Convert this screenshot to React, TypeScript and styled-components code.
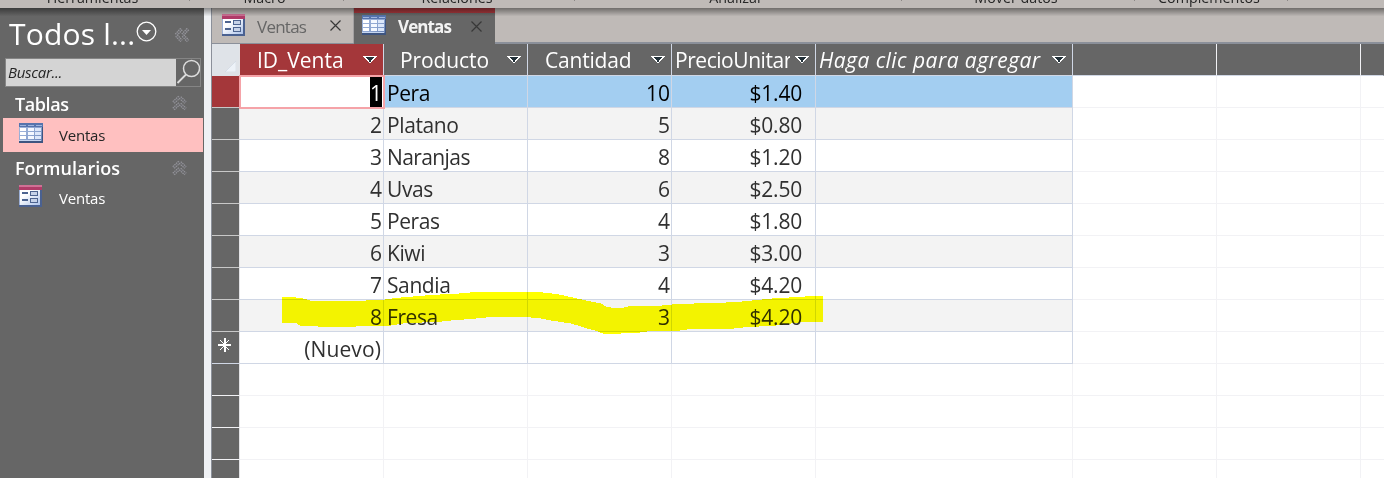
import React from 'react';
import styled, { createGlobalStyle, css } from 'styled-components';

const GlobalStyle = createGlobalStyle`
  * { box-sizing: border-box; }
  body {
    margin: 0;
    overflow: hidden;
    font-family: 'Open Sans', 'Noto Sans', sans-serif;
  }
`;

const Window = styled.div`
  position: relative;
  width: 1384px;
  height: 478px;
  display: flex;
  flex-direction: column;
  background: #fff;
  overflow: hidden;
`;

const Ribbon = styled.div`
  display: flex;
  flex: 0 0 8px;
  height: 8px;
  background: #bfbab7;
`;

const RibbonGroup = styled.div<{ $width: number }>`
  flex: 0 0 ${p => p.$width}px;
  height: 1px;
  display: flex;
  justify-content: center;
  align-items: flex-end;
  border-right: 1px solid #8c8886;
`;

const RibbonLabel = styled.span`
  font-size: 14.3px;
  line-height: 20px;
  color: #262626;
  white-space: nowrap;
  margin: 0 4px -7px 0;
`;

const RibbonShadow = styled.div`
  position: absolute;
  top: 8px;
  left: 0;
  right: 0;
  height: 8px;
  background: linear-gradient(rgba(0, 0, 0, 0.42), rgba(0, 0, 0, 0.22) 50%, rgba(0, 0, 0, 0.02));
  pointer-events: none;
`;

const Body = styled.div`
  display: flex;
  flex: 1;
  min-height: 0;
`;

const Sidebar = styled.aside`
  flex: 0 0 204px;
  background: #666;
  color: #fff;
  padding-top: 7px;
`;

const SidebarHead = styled.div`
  display: flex;
  height: 43px;
  padding-left: 9px;
`;

const SidebarTitle = styled.h1`
  margin: 0;
  width: 127px;
  font-size: 30px;
  font-weight: 400;
  line-height: 38px;
  letter-spacing: 0.2px;
  white-space: nowrap;
`;

const TitleButton = styled.div`
  width: 38px;
  padding-top: 6px;
`;

const CollapseButton = styled.div`
  padding-top: 10px;
`;

const SearchBox = styled.div`
  display: flex;
  width: 196px;
  height: 29px;
  margin-left: 5px;
  border: 1px solid #858585;
  background: #666;
`;

const SearchField = styled.div`
  width: 170px;
  padding-left: 2px;
  background: #d4d4d4;
  color: #262626;
  font-size: 15px;
  font-style: italic;
  line-height: 26px;
  letter-spacing: -0.3px;
`;

const GroupHead = styled.div<{ $height: number }>`
  display: flex;
  justify-content: space-between;
  align-items: center;
  height: ${p => p.$height}px;
  padding: 0 17px 0 15px;
`;

const GroupName = styled.span<{ $spacing: number; $drop?: number }>`
  font-size: 18px;
  font-weight: 600;
  line-height: 24px;
  letter-spacing: ${p => p.$spacing}px;
  margin-top: ${p => p.$drop ?? 0}px;
`;

const NavItem = styled.div<{ $selected?: boolean }>`
  display: flex;
  align-items: center;
  height: ${p => (p.$selected ? 34 : 30)}px;
  margin: 0 1px 0 3px;
  padding-left: 16px;
  background: ${p => (p.$selected ? '#ffc0c0' : 'transparent')};
  color: ${p => (p.$selected ? '#262626' : '#fff')};
  font-size: 15px;
  letter-spacing: -0.2px;
`;

const NavIcon = styled.span<{ $lift: number }>`
  display: flex;
  width: 40px;
  padding-bottom: ${p => p.$lift}px;
`;

const Splitter = styled.div`
  flex: 0 0 8px;
  background: #eff1f4;
  border-right: 1px solid #8b909a;
`;

const Main = styled.main`
  flex: 1;
  min-width: 0;
  background: #fff;
`;

const TabBar = styled.div`
  display: flex;
  height: 36px;
  background: linear-gradient(#8b909a, #8b909a) 0 100% / 100% 2px no-repeat, #bfbab7;
`;

const Tab = styled.div<{ $active?: boolean }>`
  display: flex;
  align-items: center;
  height: ${p => (p.$active ? 36 : 35)}px;
  font-size: 17px;
  padding-left: 8px;
  ${p =>
    p.$active
      ? css`
          width: 141px;
          background: #666;
          border-top: 5px solid #a8373c;
          color: #f2f2f2;
          font-weight: 700;
        `
      : css`
          width: 142px;
          padding-left: 10px;
          background: #bfbab7;
          border-right: 1px solid #a3a1a2;
          color: #666;
        `}
`;

const TabIcon = styled.span<{ $active?: boolean }>`
  display: flex;
  width: ${p => (p.$active ? 36 : 35)}px;
  padding-bottom: ${p => (p.$active ? 7 : 1)}px;
`;

const TabName = styled.span<{ $active?: boolean }>`
  width: ${p => (p.$active ? 73 : 73)}px;
  line-height: 24px;
  letter-spacing: ${p => (p.$active ? -0.9 : -0.75)}px;
  padding-bottom: ${p => (p.$active ? 3 : 0)}px;
  margin-top: ${p => (p.$active ? 0 : 2)}px;
`;

const TabClose = styled.span<{ $active?: boolean }>`
  display: flex;
  padding-bottom: ${p => (p.$active ? 5 : 0)}px;
`;

const Sheet = styled.div`
  display: flex;
  flex-direction: column;
`;

const Row = styled.div`
  display: grid;
  grid-template-columns: 28px repeat(4, 144px) 257px 144px 144px 1fr;
  height: 32px;
`;

const Gutter = styled.div<{ $bg?: string; $line: string }>`
  display: flex;
  align-items: center;
  background: ${p => p.$bg ?? '#666'};
  border-right: 1px solid #e3e3e6;
  border-bottom: 1px solid ${p => p.$line};
`;

const Corner = styled(Gutter)`
  align-items: flex-end;
  justify-content: flex-end;
  padding: 0 3px 3px 0;
`;

const HeadCell = styled.div<{ $selected?: boolean; $pad: number; $line: string }>`
  display: flex;
  align-items: center;
  background: ${p => (p.$selected ? '#a4373a' : '#666')};
  border-right: 1px solid ${p => p.$line};
  border-bottom: 1px solid #d0d7e5;
  color: #fff;
  padding: 0 6px 0 ${p => p.$pad}px;
  overflow: hidden;

  svg { flex: none; margin: 0 0 0 auto; }
`;

const HeadName = styled.span<{ $spacing: number; $italic?: boolean; $clip?: boolean }>`
  font-size: 21px;
  line-height: 30px;
  font-style: ${p => (p.$italic ? 'italic' : 'normal')};
  letter-spacing: ${p => p.$spacing}px;
  white-space: nowrap;
  ${p => p.$clip && 'width: 115px; overflow: hidden;'}
`;

const Cell = styled.div<{ $bg: string; $line: string; $right?: boolean; $pad?: number; $focus?: boolean }>`
  display: flex;
  justify-content: ${p => (p.$right ? 'flex-end' : 'flex-start')};
  padding: 0 ${p => (p.$right ? p.$pad ?? 1 : 0)}px 0 ${p => (p.$right ? 0 : 3)}px;
  background: ${p => p.$bg};
  border-right: 1px solid ${p => p.$line};
  border-bottom: 1px solid ${p => p.$line};
  color: #303030;
  font-size: 21px;
  line-height: 35px;
  white-space: nowrap;
  overflow: hidden;

  &:last-child { border-right: 0; }

  ${p =>
    p.$focus &&
    css`
      overflow: visible;
      outline: 1px solid #f5a3a8;
      outline-offset: -1px;
      box-shadow: 0 0 0 1px #f5a3a8;
      z-index: 1;
    `}
`;

const CellText = styled.span<{ $spacing: number; $active?: boolean }>`
  letter-spacing: ${p => p.$spacing}px;
  ${p => p.$active && 'color: #000;'}
`;

const SelectedText = styled.span`
  height: 31px;
  background: #000;
  color: #fff;
`;

const Marker = styled.svg`
  position: absolute;
  left: 0;
  top: 0;
  mix-blend-mode: multiply;
  pointer-events: none;
`;

const TableIcon = () => (
  <svg width="24" height="20" viewBox="0 0 24 20" shapeRendering="crispEdges">
    <defs>
      <linearGradient id="tableBody" x1="0" y1="0" x2="1" y2="1">
        <stop offset="0" stopColor="#a9bcdf" />
        <stop offset="0.6" stopColor="#8ba3cf" />
        <stop offset="1" stopColor="#5f7bb0" />
      </linearGradient>
    </defs>
    <rect width="24" height="20" fill="url(#tableBody)" />
    <rect width="24" height="4" fill="#5674ad" />
    <path d="M1 2.500h6M9 2.500h6M17 2.500h6" stroke="#9fb5dd" />
    {[5, 9, 13].map(y => (
      <g key={y}>
        <rect x="1" y={y} width="6" height="3" fill="#fff" />
        <rect x="9" y={y} width="6" height="3" fill="#f4f8ff" />
        <rect x="16" y={y} width="6" height="3" fill="#dce7fa" />
      </g>
    ))}
    <rect x="0" y="17" width="22" height="1" fill="#c6d6f0" />
    <path d="M0 19h24" stroke="#3e5580" strokeWidth="2" />
    <path d="M23.500 4v16" stroke="#3e5580" />
  </svg>
);

const FormIcon = () => (
  <svg width="23" height="22" viewBox="0 0 23 22" shapeRendering="crispEdges">
    <defs>
      <linearGradient id="formBody" x1="0" y1="0" x2="1" y2="1">
        <stop offset="0.3" stopColor="#fff" />
        <stop offset="1" stopColor="#adc3ea" />
      </linearGradient>
    </defs>
    <rect width="23" height="22" fill="#9db0d6" />
    <rect x="1" y="5" width="20" height="15" fill="url(#formBody)" />
    <rect width="23" height="5" fill="#b03b68" />
    <rect width="23" height="2" fill="#cf7095" />
    <path d="M3 8h6M3 15h6" stroke="#4d6490" strokeWidth="2" />
    <rect x="11.500" y="6.500" width="7" height="4" fill="#c6d2e8" stroke="#4d6490" />
    <rect x="11.500" y="13.500" width="7" height="4" fill="#c6d2e8" stroke="#4d6490" />
    <path d="M0 21h23" stroke="#4a6191" strokeWidth="2" />
    <path d="M22 5v17" stroke="#4a6191" strokeWidth="2" />
  </svg>
);

const DropIcon = () => (
  <svg width="14" height="8" viewBox="0 0 14 8" shapeRendering="crispEdges">
    <path d="M2 1h10l-5 5.500z" fill="#223038" />
    <path
      d="M0 0h14v1h-14zM1 1h2v1h-2zM11 1h2v1h-2zM2 2h2v1h-2zM10 2h2v1h-2zM3 3h2v1h-2zM9 3h2v1h-2zM4 4h2v1h-2zM8 4h2v1h-2zM5 5h1v1h-1zM8 5h1v1h-1zM6 6h2v1h-2z"
      fill="#fff"
    />
  </svg>
);

const CloseIcon = () => (
  <svg width="11" height="11" viewBox="0 0 11 11">
    <path d="M.5.5l10 10M10.500.5l-10 10" stroke="#383838" strokeWidth="1.200" />
  </svg>
);

const CircleDropIcon = () => (
  <svg width="21" height="21" viewBox="0 0 21 21">
    <circle cx="10.500" cy="10.500" r="9.300" fill="none" stroke="#fff" strokeWidth="1.300" />
    <path d="M6 9h9l-4.500 5z" fill="#fff" />
  </svg>
);

const DoubleLeftIcon = () => (
  <svg width="16" height="14" viewBox="0 0 16 14">
    <path d="M7.500 1L2 7l5.500 6M14 1L8.500 7l5.500 6" fill="none" stroke="#96969c" strokeWidth="3.400" strokeDasharray="1.500 0.700" />
    <path d="M7.500 1L2 7l5.500 6M14 1L8.500 7l5.500 6" fill="none" stroke="#6c6c70" strokeWidth="1.100" />
  </svg>
);

const DoubleUpIcon = () => (
  <svg width="15" height="16" viewBox="0 0 15 16">
    <path d="M1.500 7.500l6-5.500 6 5.500M1.500 14l6-5.500 6 5.500" fill="none" stroke="#96969c" strokeWidth="3.400" strokeDasharray="1.500 0.700" />
    <path d="M1.500 7.500l6-5.500 6 5.500M1.500 14l6-5.500 6 5.500" fill="none" stroke="#6c6c70" strokeWidth="1.100" />
  </svg>
);

const SearchIcon = () => (
  <svg width="24" height="27" viewBox="0 0 24 27">
    <circle cx="15.500" cy="9.500" r="8" fill="none" stroke="#dcdcdc" strokeWidth="1.500" />
    <path d="M10 15.500L1.500 24" stroke="#dcdcdc" strokeWidth="1.800" />
  </svg>
);

const NewRowIcon = () => (
  <svg width="28" height="31" viewBox="0 0 28 31" shapeRendering="crispEdges">
    <path d="M6 12h14v2h-14zM12 6h2v14h-2z" fill="#fff" />
    <path
      d="M8 8h1v1h-1zM9 9h1v1h-1zM10 10h1v1h-1zM11 11h1v1h-1zM14 14h1v1h-1zM15 15h1v1h-1zM16 16h1v1h-1zM17 17h1v1h-1zM17 8h1v1h-1zM16 9h1v1h-1zM15 10h1v1h-1zM14 11h1v1h-1zM11 14h1v1h-1zM10 15h1v1h-1zM9 16h1v1h-1zM8 17h1v1h-1z"
      fill="#fff"
    />
  </svg>
);

const groups: [string, number][] = [
  ['Herramientas', 190],
  ['Macro', 154],
  ['Relaciones', 231],
  ['Analizar', 327],
  ['Mover datos', 233],
  ['Complementos', 153],
];

const rows: [string, string, string, string][] = [
  ['1', 'Pera', '10', '$1.40'],
  ['2', 'Platano', '5', '$0.80'],
  ['3', 'Naranjas', '8', '$1.20'],
  ['4', 'Uvas', '6', '$2.50'],
  ['5', 'Peras', '4', '$1.80'],
  ['6', 'Kiwi', '3', '$3.00'],
  ['7', 'Sandia', '4', '$4.20'],
  ['8', 'Fresa', '3', '$4.20'],
];

const LINE = '#d0d7e5';
const FAINT = '#f2f2f5';

const EmptyCells = ({ count }: { count: number }) => (
  <>
    {Array.from({ length: count }, (_, i) => (
      <Cell key={i} $bg="#fff" $line={FAINT} />
    ))}
  </>
);

export default function App() {
  return (
    <>
      <GlobalStyle />
      <Window>
        <Ribbon>
          {groups.map(([name, width]) => (
            <RibbonGroup key={name} $width={width}>
              <RibbonLabel>{name}</RibbonLabel>
            </RibbonGroup>
          ))}
        </Ribbon>
        <Body>
          <Sidebar>
            <SidebarHead>
              <SidebarTitle>Todos l...</SidebarTitle>
              <TitleButton><CircleDropIcon /></TitleButton>
              <CollapseButton><DoubleLeftIcon /></CollapseButton>
            </SidebarHead>
            <SearchBox>
              <SearchField>Buscar...</SearchField>
              <SearchIcon />
            </SearchBox>
            <GroupHead $height={31}>
              <GroupName $spacing={-0.4} $drop={2}>Tablas</GroupName>
              <DoubleUpIcon />
            </GroupHead>
            <NavItem $selected><NavIcon $lift={4}><TableIcon /></NavIcon>Ventas</NavItem>
            <GroupHead $height={31}>
              <GroupName $spacing={0}>Formularios</GroupName>
              <DoubleUpIcon />
            </GroupHead>
            <NavItem><NavIcon $lift={4}><FormIcon /></NavIcon>Ventas</NavItem>
          </Sidebar>
          <Splitter />
          <Main>
            <TabBar>
              <Tab>
                <TabIcon><FormIcon /></TabIcon>
                <TabName>Ventas</TabName>
                <TabClose><CloseIcon /></TabClose>
              </Tab>
              <Tab $active>
                <TabIcon $active><TableIcon /></TabIcon>
                <TabName $active>Ventas</TabName>
                <TabClose $active><CloseIcon /></TabClose>
              </Tab>
            </TabBar>
            <Sheet>
              <Row>
                <Corner $bg="#dfe3e8" $line="#dfe3e8">
                  <svg width="11" height="11" viewBox="0 0 11 11">
                    <path d="M11 0v11H0z" fill="#edf2f8" stroke="#c9d2df" strokeWidth="0.5" />
                  </svg>
                </Corner>
                <HeadCell $selected $pad={17} $line={LINE}><HeadName $spacing={0}>ID_Venta</HeadName><DropIcon /></HeadCell>
                <HeadCell $pad={16} $line={LINE}><HeadName $spacing={-0.1}>Producto</HeadName><DropIcon /></HeadCell>
                <HeadCell $pad={17} $line={LINE}><HeadName $spacing={-0.2}>Cantidad</HeadName><DropIcon /></HeadCell>
                <HeadCell $pad={3} $line={LINE}><HeadName $spacing={-0.45} $clip>PrecioUnitario</HeadName><DropIcon /></HeadCell>
                <HeadCell $pad={3} $line={LINE}><HeadName $spacing={0.45} $italic>Haga clic para agregar</HeadName><DropIcon /></HeadCell>
                <HeadCell $pad={0} $line={FAINT} />
                <HeadCell $pad={0} $line={FAINT} />
                <HeadCell $pad={0} $line="#666" />
              </Row>
              {rows.map(([id, product, amount, price], i) => {
                const bg = i === 0 ? '#a3cef1' : i % 2 ? '#f3f3f3' : '#fff';
                const active = i === 0;
                return (
                  <Row key={id}>
                    <Gutter $bg={active ? '#a4373a' : '#666'} $line="#c8c8c8" />
                    <Cell $bg={active ? '#fff' : bg} $line={LINE} $right $focus={active}>
                      {active ? <SelectedText>{id}</SelectedText> : <CellText $spacing={0}>{id}</CellText>}
                    </Cell>
                    <Cell $bg={bg} $line={LINE}><CellText $spacing={product === 'Naranjas' ? -0.6 : -0.4} $active={active}>{product}</CellText></Cell>
                    <Cell $bg={bg} $line={LINE} $right><CellText $spacing={0} $active={active}>{amount}</CellText></Cell>
                    <Cell $bg={bg} $line={LINE} $right $pad={13}><CellText $spacing={-0.2} $active={active}>{price}</CellText></Cell>
                    <Cell $bg={bg} $line={LINE} />
                    <EmptyCells count={3} />
                  </Row>
                );
              })}
              <Row>
                <Gutter $line={LINE}><NewRowIcon /></Gutter>
                <Cell $bg="#fff" $line={LINE} $right $pad={2}><CellText $spacing={0.1}>(Nuevo)</CellText></Cell>
                {[0, 1, 2, 3].map(i => <Cell key={i} $bg="#fff" $line={LINE} />)}
                <EmptyCells count={3} />
              </Row>
              {[0, 1, 2, 3].map(i => (
                <Row key={i}>
                  <Gutter $line={FAINT} />
                  <EmptyCells count={8} />
                </Row>
              ))}
            </Sheet>
          </Main>
        </Body>
        <RibbonShadow />
        <Marker width="1384" height="478" viewBox="0 0 1384 478" shapeRendering="crispEdges">
          <path
            d="M282 297h9l10 1 4 1 6 2h54l1-1 19-.5 10-1.500 12-1 24-2 28-1.500 17-1.500h60l13 1 13 2 13 3 9 2 17 3.500 6 3.500 8 1h7l7-1.700 42-1 2-1.300 41-1 23-1 20-2 20-2 23-1 10-1h13v26h-20l-16 2-15 2-25 1-18 2-42 .5-10 1.500-30 .5-10 1.500-33 1-7-3-8-2-8-2.500-10-3-20-3-12-2.500-16-1h-32l-20 2-15 1-19 2-31 1-18 3h-32l-1 1h-37l-1-1-17-.5-4-2.500h-14z"
            fill="#ff0"
          />
        </Marker>
      </Window>
    </>
  );
}
